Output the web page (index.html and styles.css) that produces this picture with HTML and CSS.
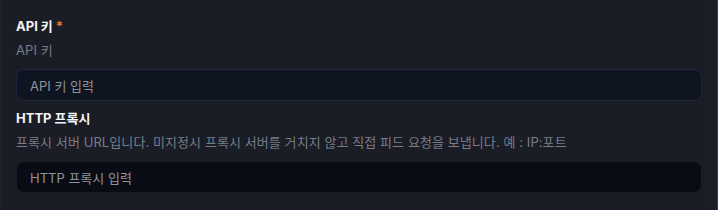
FILE: index.html
```html
<!DOCTYPE html>
<html lang="ko">
<head>
<meta charset="utf-8">
<link rel="stylesheet" href="styles.css">
</head>
<body>
<div class="frame">
  <div class="panel">
    <div class="field">
      <label class="label">API 키<span class="req">*</span></label>
      <div class="desc">API 키</div>
      <div class="input input-a"><span class="ph">API 키 입력</span></div>
    </div>
    <div class="field">
      <label class="label">HTTP 프록시</label>
      <div class="desc">프록시 서버 URL입니다. 미지정시 프록시 서버를 거치지 않고 직접 피드 요청을 보냅니다. 예 : IP:포트</div>
      <div class="input input-b"><span class="ph">HTTP 프록시 입력</span></div>
    </div>
  </div>
  <div class="side"></div>
</div>
</body>
</html>
```
FILE: styles.css
```css
html, body {
  margin: 0;
  padding: 0;
  background: #1a1d26;
  width: 718px;
  height: 210px;
  overflow: hidden;
}
body {
  font-family: "Inter", "Noto Sans CJK KR", sans-serif;
  -webkit-font-smoothing: antialiased;
}
.frame {
  display: flex;
  height: 210px;
  border-left: 1px solid #1f2330;
}
.panel {
  flex: 1;
  padding: 16px 8px 0 15px;
  display: flex;
  flex-direction: column;
  gap: 7px;
}
.side {
  width: 7px;
  background: #1b1e28;
  border-right: 1px solid #4a3a3a;
}
.field {
  display: flex;
  flex-direction: column;
}
.label {
  font-size: 13px;
  font-weight: 700;
  color: #f3f4f6;
  line-height: 20px;
  height: 20px;
}
.req {
  color: #f97316;
  margin-left: 3px;
}
.desc {
  font-size: 13px;
  color: #787c86;
  line-height: 20px;
  margin-top: 4px;
  letter-spacing: 0.08px;
}
.input {
  margin-top: 9px;
  height: 30px;
  border-radius: 8px;
  display: flex;
  align-items: center;
  padding: 0 13px;
}
.input-a {
  background: #0f1421;
  border: 1px solid #1e2640;
}
.input-b {
  background: #090c15;
  border: 1px solid #181d29;
}
.ph {
  font-size: 13px;
  color: #8f939b;
}
```
